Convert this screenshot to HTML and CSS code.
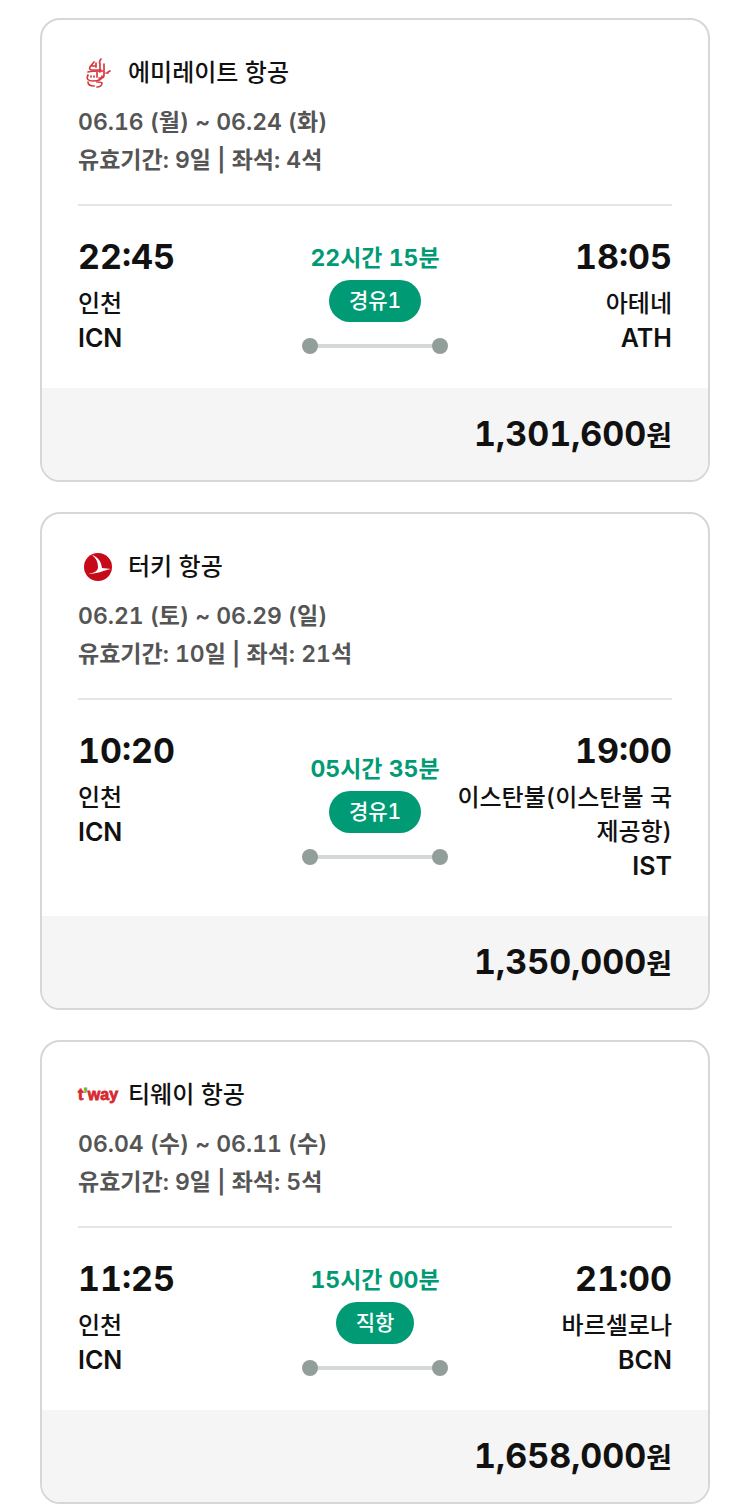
FILE: index.html
```html
<!DOCTYPE html>
<html lang="ko">
<head>
  <meta charset="UTF-8">
  <meta name="viewport" content="width=device-width, initial-scale=1.0">
  <title>항공권 목록</title>
  <link rel="stylesheet" href="styles.css">
</head>
<body>
  <ul class="ticket-list">
    <li class="ticket">
      <div class="ticket-info">
        <h2 class="airline">
          <svg class="airline-logo" viewBox="0 0 40 40" aria-hidden="true">
            <g class="logo-emirates">
              <path d="M23 6c-2 2-2 3-1 5v8M16 9l-4 5c-1 2 0 3 2 3h9M18 10v4M14 13h3M26 11v11c0 2-1 3-3 3h-2"/>
              <path d="M10 19c4-1 9-1 15-1M19 18v6M10 22c-2 4 0 6 5 6 6 0 9-1 9-5M28 20h2M30 19l2-1"/>
              <path d="M13 23v1M16 23v1M10 29c0 3 3 4 6 4M19 29c3 0 5 0 5 1 0 2-2 4-5 4"/>
            </g>
          </svg>
          에미레이트 항공
        </h2>
        <p class="ticket-meta">06.16 (월) ~ 06.24 (화)</p>
        <p class="ticket-meta">유효기간: 9일 | 좌석: 4석</p>
      </div>
      <div class="route">
        <div class="place">
          <strong class="time">22:45</strong>
          <span class="city">인천</span>
          <span class="code">ICN</span>
        </div>
        <div class="flight">
          <span class="duration">22시간 15분</span>
          <span class="badge">경유1</span>
          <span class="track"></span>
        </div>
        <div class="place place-arrival">
          <strong class="time">18:05</strong>
          <span class="city">아테네</span>
          <span class="code">ATH</span>
        </div>
      </div>
      <p class="price">1,301,600<span class="won">원</span></p>
    </li>

    <li class="ticket">
      <div class="ticket-info">
        <h2 class="airline">
          <svg class="airline-logo" viewBox="0 0 40 40" aria-hidden="true">
            <circle cx="20" cy="20" r="14" fill="#c70a1a"/>
            <path fill="#fff" d="M14 8c6 2 9 6 10 13l9 1c-7 1-13 5-23 5 6-1 10-3 10-7 0-5-2-9-6-12z"/>
          </svg>
          터키 항공
        </h2>
        <p class="ticket-meta">06.21 (토) ~ 06.29 (일)</p>
        <p class="ticket-meta">유효기간: 10일 | 좌석: 21석</p>
      </div>
      <div class="route">
        <div class="place">
          <strong class="time">10:20</strong>
          <span class="city">인천</span>
          <span class="code">ICN</span>
        </div>
        <div class="flight">
          <span class="duration">05시간 35분</span>
          <span class="badge">경유1</span>
          <span class="track"></span>
        </div>
        <div class="place place-arrival">
          <strong class="time">19:00</strong>
          <span class="city">이스탄불(이스탄불 국제공항)</span>
          <span class="code">IST</span>
        </div>
      </div>
      <p class="price">1,350,000<span class="won">원</span></p>
    </li>

    <li class="ticket">
      <div class="ticket-info">
        <h2 class="airline">
          <svg class="airline-logo" viewBox="0 0 40 40" aria-hidden="true">
            <text class="logo-tway" x="0" y="25">t<tspan class="logo-tway-mark">’</tspan>way</text>
          </svg>
          티웨이 항공
        </h2>
        <p class="ticket-meta">06.04 (수) ~ 06.11 (수)</p>
        <p class="ticket-meta">유효기간: 9일 | 좌석: 5석</p>
      </div>
      <div class="route">
        <div class="place">
          <strong class="time">11:25</strong>
          <span class="city">인천</span>
          <span class="code">ICN</span>
        </div>
        <div class="flight">
          <span class="duration">15시간 00분</span>
          <span class="badge">직항</span>
          <span class="track"></span>
        </div>
        <div class="place place-arrival">
          <strong class="time">21:00</strong>
          <span class="city">바르셀로나</span>
          <span class="code">BCN</span>
        </div>
      </div>
      <p class="price">1,658,000<span class="won">원</span></p>
    </li>
  </ul>
</body>
</html>
```

FILE: styles.css
```css
* {
  box-sizing: border-box;
}

body {
  margin: 0;
  padding: 18px 40px 6px;
  background-color: #fff;
  color: #111;
  font-family: Inter, "Noto Sans CJK KR", sans-serif;
  font-size: 24px;
  font-variant-numeric: tabular-nums;
}

h2,
p,
ul {
  margin: 0;
  padding: 0;
}

.ticket-list {
  display: flex;
  flex-direction: column;
  gap: 30px;
  list-style: none;
}

.ticket {
  border: 2px solid #d5d8d8;
  border-radius: 20px;
  overflow: hidden;
}

.ticket-info {
  margin: 0 36px;
  padding: 32px 0 25px;
  border-bottom: 2px solid #e5e5e5;
}

/* 항공사 */
.airline {
  display: flex;
  align-items: center;
  gap: 10px;
  margin-bottom: 9px;
  font-size: 24px;
  font-weight: 500;
  line-height: 42px;
}

.airline-logo {
  width: 40px;
  height: 40px;
  overflow: visible;
}

.logo-emirates {
  fill: none;
  stroke: #d83a41;
  stroke-width: 1.7;
  stroke-linecap: round;
}

.logo-tway {
  fill: #d7282f;
  stroke: #d7282f;
  stroke-width: 0.8;
  font-family: "Liberation Sans", sans-serif;
  font-size: 16px;
  font-weight: 700;
}

.logo-tway-mark {
  fill: #6fb52c;
  stroke: #6fb52c;
}

.ticket-meta {
  color: #555;
  font-size: 23px;
  font-weight: 600;
  line-height: 38px;
}

/* 출발 / 도착 */
.route {
  display: grid;
  grid-template-columns: 1fr 146px 1fr;
  gap: 4px;
  align-items: center;
  padding: 30px 36px 33px;
}

.place {
  display: flex;
  flex-direction: column;
  align-self: start;
  line-height: 34px;
}

.place-arrival {
  text-align: right;
}

.time {
  margin-bottom: 9px;
  font-size: 34px;
  font-weight: 700;
  line-height: 42px;
}

.city {
  font-weight: 500;
  word-break: break-all;
}

.code {
  font-size: 25px;
  font-weight: 600;
}

.flight {
  display: flex;
  flex-direction: column;
  align-items: center;
}

.duration {
  color: #009b74;
  font-size: 23px;
  font-weight: 700;
  line-height: 43px;
  white-space: nowrap;
}

.badge {
  margin-bottom: 16px;
  padding: 0 20px;
  border-radius: 21px;
  background-color: #009b74;
  color: #fff;
  font-size: 21px;
  font-weight: 500;
  line-height: 42px;
}

.track {
  display: flex;
  justify-content: space-between;
  width: 100%;
  background: linear-gradient(#d5d8d8, #d5d8d8) center / 120px 4px no-repeat;
}

.track::before,
.track::after {
  content: "";
  width: 16px;
  height: 16px;
  border-radius: 50%;
  background-color: #919e99;
}

/* 가격 */
.price {
  padding: 26px 36px;
  background-color: #f5f5f5;
  font-size: 34px;
  font-weight: 700;
  line-height: 40px;
  text-align: right;
}

.won {
  font-size: 28px;
  line-height: 1;
}
```
